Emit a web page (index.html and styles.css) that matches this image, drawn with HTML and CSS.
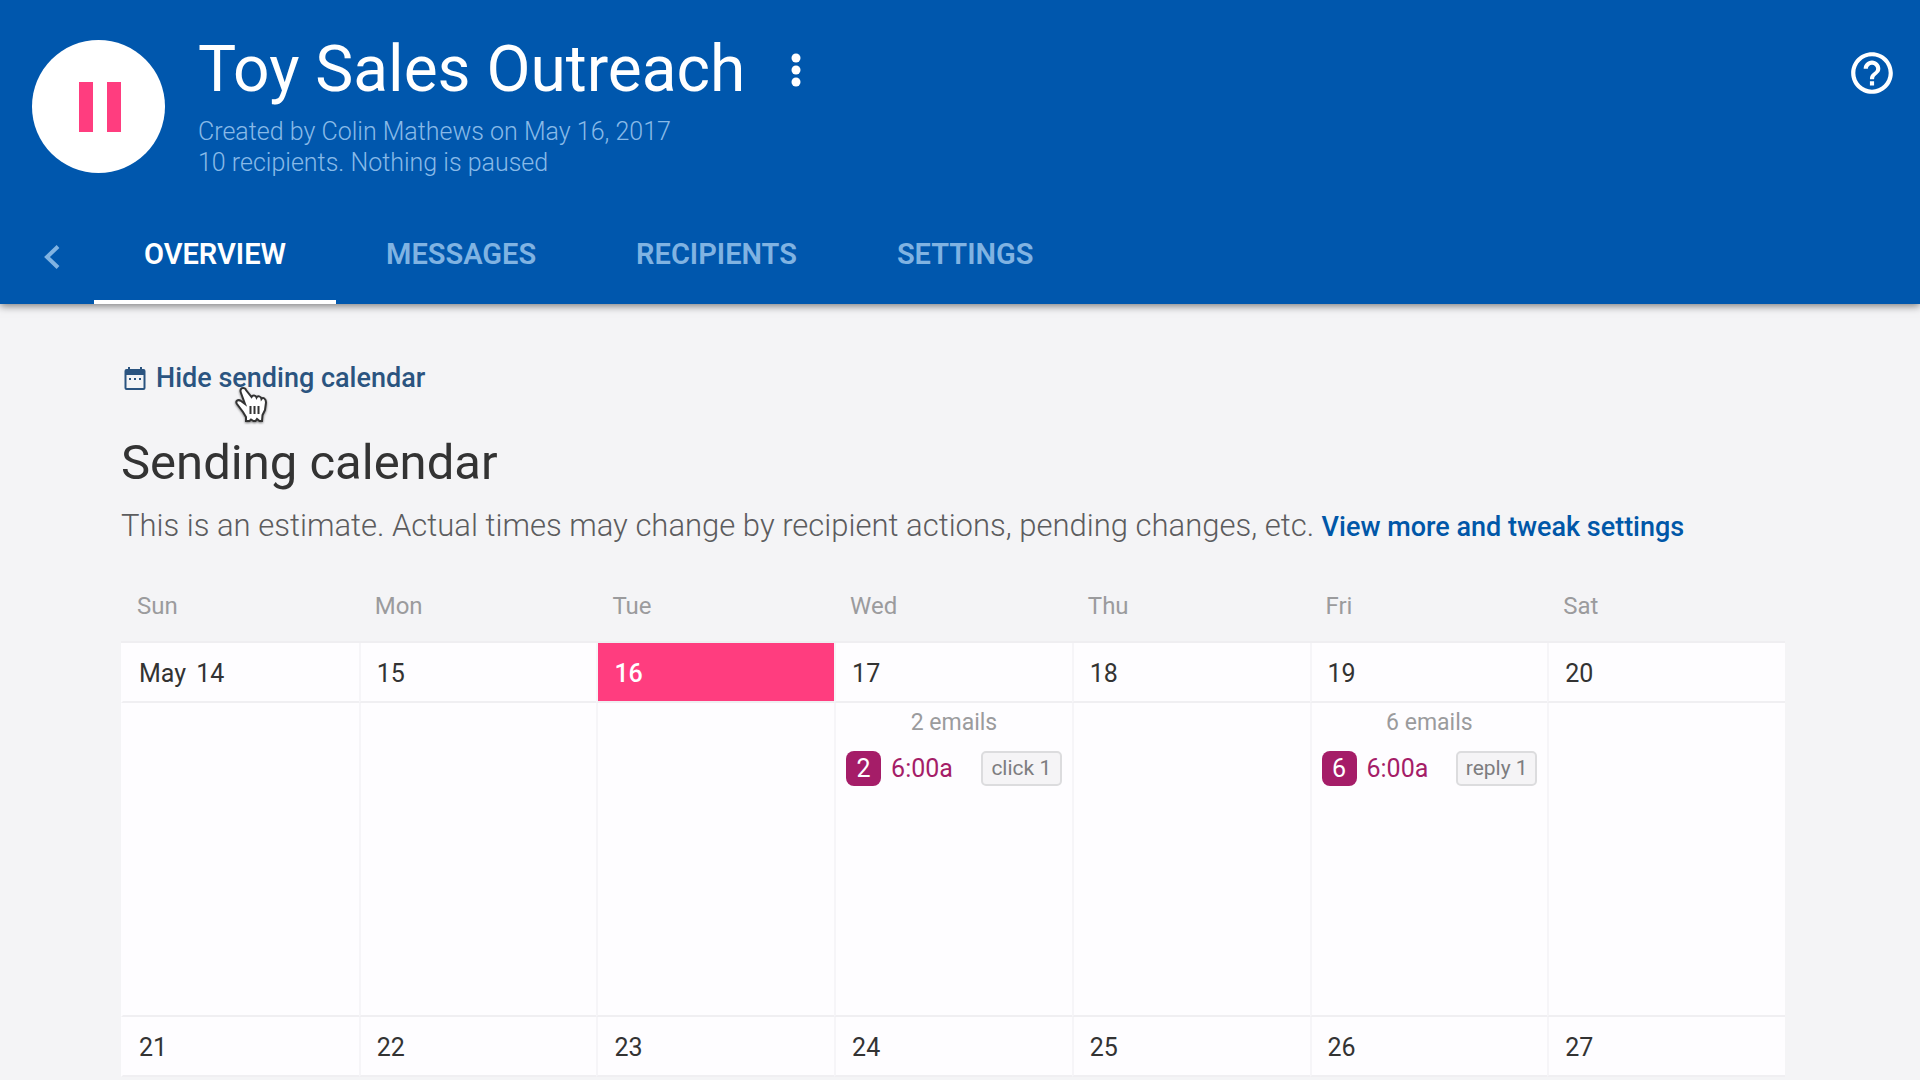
FILE: index.html
```html
<!DOCTYPE html>
<html lang="en">
<head>
<meta charset="utf-8">
<title>Toy Sales Outreach</title>
<link rel="stylesheet" href="styles.css">
</head>
<body>
<header class="header">
  <div class="campaign">
    <button class="pause" type="button" aria-label="Pause campaign">
      <svg width="42" height="50" viewBox="0 0 42 50"><path d="M0 0h14v50H0zM28 0h14v50H28z"/></svg>
    </button>
    <div class="info">
      <div class="title-row">
        <h1 class="title">Toy Sales Outreach</h1>
        <button class="icon-button" type="button" aria-label="More options">
          <svg width="10" height="34" viewBox="0 0 10 34"><circle cx="5" cy="5" r="4.500"/><circle cx="5" cy="17" r="4.500"/><circle cx="5" cy="29" r="4.500"/></svg>
        </button>
      </div>
      <p class="meta">Created by Colin Mathews on May 16, 2017<br>10 recipients. Nothing is paused</p>
    </div>
    <button class="icon-button help" type="button" aria-label="Help">
      <svg width="50" height="50" viewBox="0 0 24 24"><path d="M11 18h2v-2h-2v2zm1-16C6.480 2 2 6.480 2 12s4.480 10 10 10 10-4.480 10-10S17.520 2 12 2zm0 18c-4.410 0-8-3.590-8-8s3.590-8 8-8 8 3.590 8 8-3.590 8-8 8zm0-14c-2.210 0-4 1.790-4 4h2c0-1.100.9-2 2-2s2 .9 2 2c0 2-3 1.750-3 5h2c0-2.250 3-2.500 3-5 0-2.210-1.790-4-4-4z"/></svg>
    </button>
  </div>
  <nav class="tabs">
    <a class="back" href="#" aria-label="Back"><svg width="16" height="24" viewBox="0 0 16 24"><path d="M14 1.500L3 12l11 10.500"/></svg></a>
    <a class="tab active" href="#">OVERVIEW</a>
    <a class="tab" href="#">MESSAGES</a>
    <a class="tab" href="#">RECIPIENTS</a>
    <a class="tab" href="#">SETTINGS</a>
  </nav>
</header>
<main class="content">
  <a class="toggle" href="#">
    <svg width="22" height="23" viewBox="0 0 22 23"><path fill-rule="evenodd" d="M4 0h2v2h10V0h2v2h1.500A2 2 0 0 1 21.500 4v17a2 2 0 0 1-2 2h-17a2 2 0 0 1-2-2V4a2 2 0 0 1 2-2H4zM2.500 8v13h17V8zM5 11h2v2H5zm5 0h2v2h-2zm5 0h2v2h-2z"/></svg>
    <span>Hide sending calendar</span>
    <svg class="cursor" width="34" height="38" viewBox="0 0 34 38"><path d="M9 2C6.500 2 6 4.500 7 7l4 11-4-3c-3-2-6 0-4 3l6 8 3 5v4h3.500l1.500-1.500 2.500 1.500h2l1.500-2 2.500 2h2.500l.5-6 2.500-5 1-7.500c0-4-3-5.500-4.500-3.500-.5-3-4-3.500-5-1.500-1-2.500-4-2.500-5-.5L12 4c-.5-1.500-1.500-2-3-2z"/><path d="M16.500 20v8M20.500 20v8M24.500 20v8"/></svg>
  </a>
  <h2 class="heading">Sending calendar</h2>
  <p class="estimate">This is an estimate. Actual times may change by recipient actions, pending changes, etc. <a class="tweak" href="#">View more and tweak settings</a></p>
  <table class="calendar">
    <thead>
      <tr><th>Sun</th><th>Mon</th><th>Tue</th><th>Wed</th><th>Thu</th><th>Fri</th><th>Sat</th></tr>
    </thead>
    <tbody>
      <tr class="dates"><td><span class="month">May</span> 14</td><td>15</td><td class="today">16</td><td>17</td><td>18</td><td>19</td><td>20</td></tr>
      <tr class="events">
        <td></td><td></td><td></td>
        <td>
          <div class="count">2 emails</div>
          <div class="event"><span class="badge">2</span><span class="time">6:00a</span><span class="tag">click 1</span></div>
        </td>
        <td></td>
        <td>
          <div class="count">6 emails</div>
          <div class="event"><span class="badge">6</span><span class="time">6:00a</span><span class="tag">reply 1</span></div>
        </td>
        <td></td>
      </tr>
      <tr class="dates"><td>21</td><td>22</td><td>23</td><td>24</td><td>25</td><td>26</td><td>27</td></tr>
    </tbody>
  </table>
</main>
</body>
</html>
```
FILE: styles.css
```css
* { box-sizing: border-box; }

body {
  margin: 0;
  background: #f4f4f6;
  color: #333;
  font-family: Roboto, "Liberation Sans", sans-serif;
}

h1, h2, p { margin: 0; font-weight: 400; }
a { text-decoration: none; }
svg { display: block; }

button {
  padding: 0;
  border: 0;
  background: none;
  font: inherit;
}

.header {
  position: relative;
  background: #0057ad;
  color: #fff;
  box-shadow: 0 2px 8px rgba(0, 0, 0, 0.5);
}

.campaign {
  display: flex;
  align-items: flex-start;
  min-height: 204px;
  padding: 28px 23px 0 32px;
}

.pause {
  display: flex;
  flex: none;
  align-items: center;
  justify-content: center;
  width: 133px;
  height: 133px;
  margin: 12px 33px 0 0;
  padding-left: 3px;
  border-radius: 50%;
  background: #fff;
}

.pause svg { fill: #ff3d7f; }

.info { flex: 1; }

.title-row {
  display: flex;
  align-items: center;
  gap: 46px;
}

.title { font-size: 64px; line-height: 84px; }
.icon-button svg { fill: #fff; }
.help { margin-top: 20px; }

.meta {
  margin-top: 4px;
  color: #88bae8;
  font-size: 25px;
  line-height: 31px;
  font-weight: 300;
}

.tabs { display: flex; height: 100px; }

.back {
  display: flex;
  align-items: center;
  width: 94px;
  padding: 6px 0 0 44px;
}

.back svg {
  fill: none;
  stroke: #80b3e2;
  stroke-width: 4;
}

.tab {
  padding: 32px 50px 0;
  border-bottom: 4px solid transparent;
  color: #80b3e2;
  font-size: 29px;
  line-height: 36px;
  font-weight: 600;
}

.active { border-color: #fff; color: #fff; }

.content { padding: 56px 135px 0 121px; }

.toggle {
  position: relative;
  display: inline-flex;
  align-items: center;
  gap: 10px;
  padding-left: 3px;
  color: #2b5480;
  font-size: 27px;
  line-height: 36px;
  font-weight: 500;
}

.toggle svg { fill: #2b5480; }

.toggle .cursor {
  position: absolute;
  top: 26px;
  left: 113px;
  fill: #fff;
  stroke: #333;
  stroke-width: 2;
  filter: drop-shadow(0 1px 1px rgba(0, 0, 0, 0.5));
}

.heading {
  margin-top: 33px;
  font-size: 49px;
  line-height: 68px;
}

.estimate {
  margin-top: 5px;
  color: #5c5c5e;
  font-size: 31px;
  line-height: 48px;
  font-weight: 300;
}

.tweak { color: #0057a8; font-size: 27px; font-weight: 500; }

.calendar {
  width: 100%;
  margin-top: 29px;
  border-collapse: separate;
  border-spacing: 0;
  table-layout: fixed;
}

th, td { padding: 0; text-align: left; }

th {
  height: 63px;
  padding: 0 16px 10px;
  border-bottom: 2px solid #efeef1;
  color: #9b9b9d;
  font-size: 24px;
  font-weight: 400;
}

td {
  border-left: 2px solid #f6f5f8;
  border-bottom: 2px solid #f0eff2;
  background: #fefdff;
}

td:first-child { border-left-color: #fefdff; }

.dates td {
  height: 60px;
  padding: 4px 16px 0;
  font-size: 25px;
  line-height: 32px;
}

.month { margin-right: 4px; }

.dates .today {
  background: #ff3d7f;
  background-clip: padding-box;
  color: #fff;
  font-weight: 500;
}

.events td { height: 314px; padding: 4px 10px 0; vertical-align: top; }

.count {
  color: #9b9b9d;
  font-size: 23px;
  line-height: 32px;
  text-align: center;
}

.event {
  display: flex;
  align-items: center;
  margin-top: 12px;
}

.badge {
  width: 35px;
  border-radius: 8px;
  background: #a51d68;
  color: #fff;
  font-size: 25px;
  line-height: 35px;
  text-align: center;
}

.time {
  margin-left: 10px;
  color: #a51d68;
  font-size: 25px;
}

.tag {
  width: 81px;
  margin-left: auto;
  border: 2px solid #dcdcde;
  border-radius: 5px;
  background: #f5f4f6;
  color: #7d7d7f;
  font-size: 21px;
  line-height: 31px;
  text-align: center;
}
```
